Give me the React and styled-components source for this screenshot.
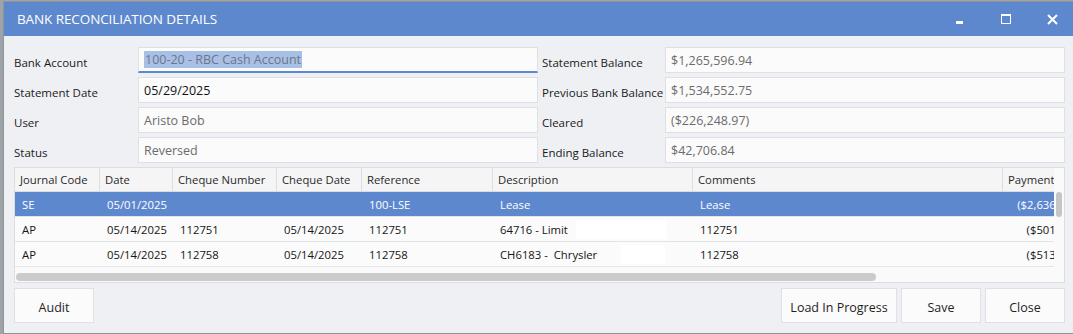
import React from "react";
import styled, { createGlobalStyle } from "styled-components";

const Global = createGlobalStyle`
  html, body { margin: 0; padding: 0; }
  body {
    background: #9ea3a8;
    overflow: hidden;
    font-family: "Open Sans", "Noto Sans", sans-serif;
  }
  #root { width: 1073px; height: 334px; overflow: hidden; }
`;

const blue = "#5e88ce";

const Window = styled.div`
  margin: 1px 0 0 3px;
  width: 1071px;
  border-left: 1px solid #8e949a;
  border-top: 1px solid #8e949a;
  border-bottom: 1px solid #8e949a;
  background: #eff0f4;
  display: flex;
  flex-direction: column;
`;

const TitleBar = styled.div`
  height: 34px;
  background: ${blue};
  display: flex;
  align-items: center;
  padding-left: 13px;
  color: #fff;
`;

const Title = styled.div`
  flex: 1;
  font-size: 13.5px;
  letter-spacing: -0.1px;
`;

const Ctrl = styled.div`
  width: 46px;
  height: 34px;
  display: flex;
  align-items: center;
  justify-content: center;
`;

const Body = styled.div`
  padding: 11px 10px 10px 10px;
  display: flex;
  flex-direction: column;
`;

const Form = styled.div`
  display: grid;
  grid-template-columns: 124px 400px 127px 400px;
  row-gap: 4px;
`;

const Label = styled.div`
  height: 26px;
  box-sizing: border-box;
  padding-top: 5px;
  display: flex;
  align-items: center;
  font-size: 11.5px;
  color: #1a1a1a;
  white-space: nowrap;
  padding-left: ${(p) => (p.$right ? "4px" : "0")};
`;

const Field = styled.div`
  height: 26px;
  box-sizing: border-box;
  border: 1px solid #dfe0e3;
  border-bottom: ${(p) => (p.$focus ? `2px solid ${blue}` : "1px solid #dfe0e3")};
  background: #fbfbfb;
  display: flex;
  align-items: center;
  padding: ${(p) => (p.$focus ? "0 5px 1px 5px" : "0 5px")};
  font-size: 12.5px;
  color: ${(p) => (p.$muted ? "#6b6b6b" : "#111")};
  white-space: nowrap;
`;

const Selected = styled.span`
  background: #a9c0e6;
  color: #6b7689;
  padding: 0 1px;
`;

const Grid = styled.div`
  margin-top: 4px;
  height: 116px;
  box-sizing: border-box;
  border: 1px solid #dcdde0;
  background: #fafafa;
  position: relative;
  overflow: hidden;
`;

const cols = "85px 73px 104px 85px 131px 200px 310px 76px";

const HeaderRow = styled.div`
  display: grid;
  grid-template-columns: ${cols};
  height: 24px;
  box-sizing: border-box;
  border-bottom: 1px solid #dcdde0;
  background: #f5f5f6;
`;

const HeadCell = styled.div`
  display: flex;
  align-items: center;
  padding-left: 5px;
  border-right: 1px solid #dcdde0;
  font-size: 11.3px;
  color: #2a2a2a;
  white-space: nowrap;
  overflow: hidden;
`;

const Viewport = styled.div`
  width: 1039px;
  overflow: hidden;
`;

const Row = styled.div`
  display: grid;
  grid-template-columns: ${cols};
  height: 25px;
  box-sizing: border-box;
  border-bottom: 1px solid #e3e4e6;
  background: ${(p) => (p.$sel ? blue : "#fbfbfb")};
  color: ${(p) => (p.$sel ? "#fff" : "#151515")};
`;

const Cell = styled.div`
  display: flex;
  align-items: center;
  justify-content: ${(p) => (p.$num ? "flex-end" : "flex-start")};
  padding: ${(p) => (p.$num ? "0 4px 0 0" : "0 0 0 7px")};
  font-size: 11.3px;
  white-space: pre;
  overflow: hidden;
`;

const Redact = styled.span`
  display: inline-block;
  width: ${(p) => p.$w}px;
  height: 19px;
  background: #ffffff;
  margin-left: ${(p) => p.$ml}px;
`;

const VThumb = styled.div`
  position: absolute;
  right: 2px;
  top: 24px;
  width: 6px;
  height: 25px;
  border-radius: 3px;
  background: #c6c6c6;
`;

const HScroll = styled.div`
  height: 15px;
  box-sizing: border-box;
  padding-top: 6px;
  padding-left: 1px;
`;

const HThumb = styled.div`
  width: 860px;
  height: 8px;
  border-radius: 4px;
  background: #cbcbcb;
`;

const Footer = styled.div`
  margin-top: 5px;
  display: flex;
  gap: 4px;
`;

const Button = styled.div`
  width: ${(p) => p.$w}px;
  height: 35px;
  box-sizing: border-box;
  border: 1px solid #dfe0e3;
  background: #fbfbfb;
  display: flex;
  align-items: center;
  justify-content: center;
  padding-top: 3px;
  font-size: 12.5px;
  color: #1f1f1f;
  margin-left: ${(p) => (p.$push ? "auto" : "0")};
`;

const headers = [
  "Journal Code",
  "Date",
  "Cheque Number",
  "Cheque Date",
  "Reference",
  "Description",
  "Comments",
  "Payments",
];

const rows = [
  { sel: true, c: ["SE", "05/01/2025", "", "", "100-LSE", "Lease", "Lease", "($2,636.00)"] },
  { c: ["AP", "05/14/2025", "112751", "05/14/2025", "112751", "64716 - Limit", "112751", "($501.00)"], r: [8, 90] },
  { c: ["AP", "05/14/2025", "112758", "05/14/2025", "112758", "CH6183 -  Chrysler", "112758", "($513.00)"], r: [24, 44] },
];

export default function App() {
  return (
    <>
      <Global />
      <Window>
        <TitleBar>
          <Title>BANK RECONCILIATION DETAILS</Title>
          <Ctrl>
            <svg width="10" height="10" viewBox="0 0 10 10">
              <rect x="1" y="7" width="7" height="3" fill="#fff" />
            </svg>
          </Ctrl>
          <Ctrl>
            <svg width="10" height="10" viewBox="0 0 10 10">
              <rect x="0.5" y="0.5" width="9" height="9" fill="none" stroke="#fff" strokeWidth="1" />
              <rect x="0" y="0" width="10" height="2" fill="#fff" />
            </svg>
          </Ctrl>
          <Ctrl>
            <svg width="11" height="11" viewBox="0 0 11 11">
              <path d="M1 1 L10 10 M10 1 L1 10" stroke="#fff" strokeWidth="2" />
            </svg>
          </Ctrl>
        </TitleBar>
        <Body>
          <Form>
            <Label>Bank Account</Label>
            <Field $focus>
              <Selected>100-20 - RBC Cash Account</Selected>
            </Field>
            <Label $right>Statement Balance</Label>
            <Field $muted>$1,265,596.94</Field>

            <Label>Statement Date</Label>
            <Field>05/29/2025</Field>
            <Label $right>Previous Bank Balance</Label>
            <Field $muted>$1,534,552.75</Field>

            <Label>User</Label>
            <Field $muted>Aristo Bob</Field>
            <Label $right>Cleared</Label>
            <Field $muted>($226,248.97)</Field>

            <Label>Status</Label>
            <Field $muted>Reversed</Field>
            <Label $right>Ending Balance</Label>
            <Field $muted>$42,706.84</Field>
          </Form>

          <Grid>
            <Viewport>
              <HeaderRow>
                {headers.map((h) => (
                  <HeadCell key={h}>{h}</HeadCell>
                ))}
              </HeaderRow>
              {rows.map((r, i) => (
                <Row key={i} $sel={r.sel}>
                  {r.c.map((v, j) => (
                    <Cell key={j} $num={j === 7}>
                      {v}
                      {j === 5 && r.r ? <Redact $ml={r.r[0]} $w={r.r[1]} /> : null}
                    </Cell>
                  ))}
                </Row>
              ))}
              <HScroll>
                <HThumb />
              </HScroll>
            </Viewport>
            <VThumb />
          </Grid>

          <Footer>
            <Button $w={80}>Audit</Button>
            <Button $w={116} $push>Load In Progress</Button>
            <Button $w={80}>Save</Button>
            <Button $w={80}>Close</Button>
          </Footer>
        </Body>
      </Window>
    </>
  );
}
